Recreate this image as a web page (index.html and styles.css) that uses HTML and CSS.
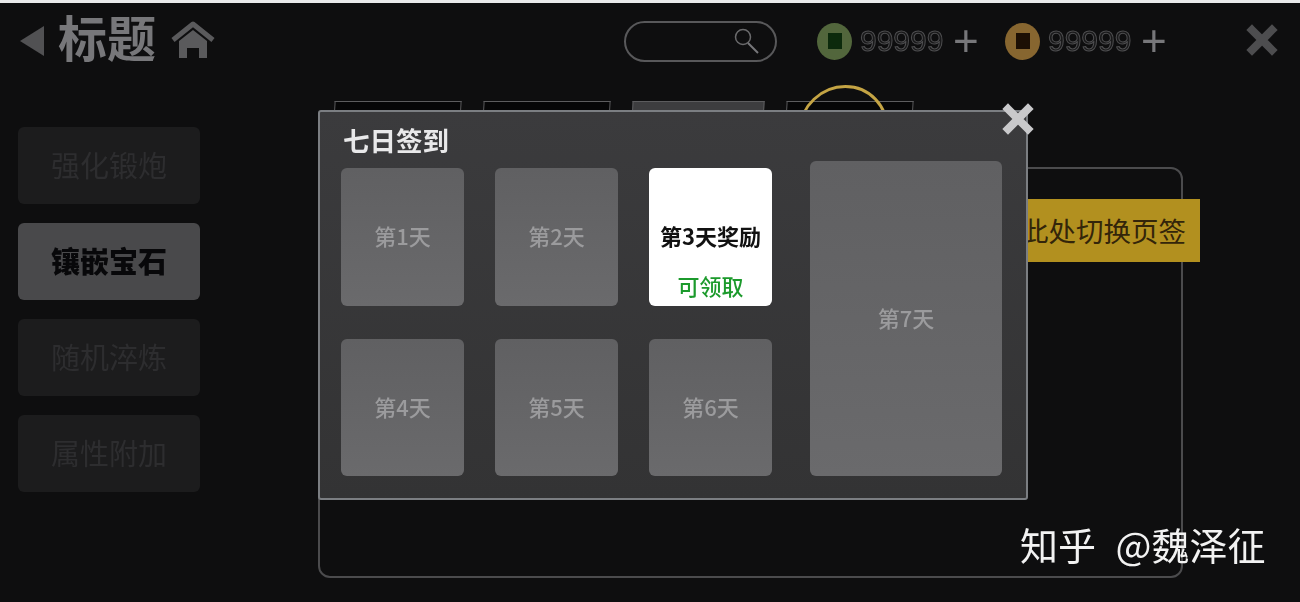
FILE: index.html
```html
<!DOCTYPE html>
<html lang="zh">
<head>
    <meta charset="utf-8">
    <title>七日签到</title>
    <link rel="stylesheet" href="styles.css">
</head>
<body>
    <div class="page">
        <div class="topline"></div>
        <div class="topbar">
            <svg class="back" width="24" height="30" viewBox="0 0 24 30"><path d="M0 15L24 0V30Z" fill="#515153"/></svg>
            <div class="title">标题</div>
            <svg class="home" width="44" height="38" viewBox="0 0 44 38">
                <path d="M2 19L22 3L42 19" fill="none" stroke="#5a5a5c" stroke-width="5" stroke-linejoin="round"/>
                <path d="M8 20L22 9L36 20V37H28V27H16V37H8Z" fill="#5a5a5c"/>
            </svg>
            <div class="search">
                <svg width="26" height="26" viewBox="0 0 26 26">
                    <circle cx="9" cy="9" r="7.5" fill="none" stroke="#6a6a6c" stroke-width="1.5"/>
                    <path d="M14 15L24 25" stroke="#77777a" stroke-width="2"/>
                </svg>
            </div>
            <div class="coin coin-green"><span></span></div>
            <div class="num">99999</div>
            <div class="plus">+</div>
            <div class="coin coin-gold"><span></span></div>
            <div class="num">99999</div>
            <div class="plus">+</div>
            <svg class="quit" width="32" height="32" viewBox="0 0 32 32">
                <path d="M6 6L26 26M26 6L6 26" stroke="#4d4d4f" stroke-width="8" stroke-linecap="square"/>
            </svg>
        </div>
        <div class="main">
            <div class="sidebar">
                <div class="side-item">强化锻炮</div>
                <div class="side-item active">镶嵌宝石</div>
                <div class="side-item">随机淬炼</div>
                <div class="side-item">属性附加</div>
            </div>
            <div class="content">
                <div class="tabs">
                    <div class="tab"></div>
                    <div class="tab"></div>
                    <div class="tab filled"></div>
                    <div class="tab last"><div class="ring"></div></div>
                </div>
                <div class="frame">
                    <div class="tip">此处切换页签</div>
                </div>
            </div>
        </div>

        <div class="modal">
            <svg class="close" width="34" height="34" viewBox="0 0 34 34">
                <path d="M7 7L27 27M27 7L7 27" stroke="#c9c9cb" stroke-width="8" stroke-linecap="square"/>
            </svg>
            <div class="modal-title">七日签到</div>
            <div class="days">
                <div class="day">第1天</div>
                <div class="day">第2天</div>
                <div class="day today">
                    <div class="today-name">第3天奖励</div>
                    <div class="today-get">可领取</div>
                </div>
                <div class="day">第4天</div>
                <div class="day">第5天</div>
                <div class="day">第6天</div>
                <div class="day big">第7天</div>
            </div>
        </div>

        <div class="watermark">知乎 @魏泽征</div>
    </div>
</body>
</html>
```

FILE: styles.css
```css
* {
    box-sizing: border-box;
}
body {
    margin: 0;
    background-color: #0e0e0f;
    font-family: "Liberation Sans", "Noto Sans CJK SC", sans-serif;
    overflow: hidden;
}
.page {
    position: relative;
    width: 1300px;
    height: 602px;
    filter: blur(0.5px);
}
.topline {
    height: 3px;
    background-color: #e9eaea;
}

/* top bar */
.topbar {
    display: flex;
    align-items: center;
    height: 76px;
    padding-left: 20px;
}
.title {
    margin-left: 14px;
    width: 98px;
    font-size: 49px;
    line-height: 60px;
    font-weight: 700;
    color: #77777a;
    font-family: "Noto Sans CJK SC", sans-serif;
    margin-top: -10px;
}
.home {
    margin-left: 15px;
    margin-top: -2px;
}
.search {
    display: flex;
    align-items: center;
    justify-content: flex-end;
    width: 153px;
    height: 41px;
    margin-left: 409px;
    padding-right: 15px;
    border: 2px solid #58585a;
    border-radius: 21px;
}
.coin {
    display: flex;
    align-items: center;
    justify-content: center;
    width: 35px;
    height: 37px;
    border-radius: 50%;
}
.coin span {
    display: block;
    width: 14px;
    height: 16px;
}
.coin-green {
    margin-left: 40px;
    background-color: #52663c;
}
.coin-green span {
    background-color: #0c2a0c;
}
.coin-gold {
    margin-left: 28px;
    background-color: #876630;
}
.coin-gold span {
    background-color: #1c0f04;
}
.num {
    width: 84px;
    margin-left: 8px;
    font-size: 30px;
    font-family: "Liberation Sans", sans-serif;
    color: #19191a;
    -webkit-text-stroke: 1px #4f4f51;
}
.plus {
    width: 24px;
    margin-left: 9px;
    font-size: 44px;
    line-height: 36px;
    text-align: center;
    color: #77777a;
}
.quit {
    margin-left: 81px;
    margin-top: -3px;
}

/* page behind the dialog */
.main {
    display: flex;
    padding-left: 18px;
}
.sidebar {
    display: flex;
    flex-direction: column;
    gap: 19px;
    width: 182px;
    margin-top: 48px;
}
.side-item {
    height: 77px;
    line-height: 75px;
    text-align: center;
    border-radius: 6px;
    background-color: #1c1c1d;
    color: #2d2d2f;
    font-size: 29px;
    font-family: "Noto Sans CJK SC", sans-serif;
}
.side-item.active {
    background-color: #49494b;
    color: #08080a;
    font-weight: 900;
}
.content {
    width: 865px;
    margin-left: 118px;
}
.tabs {
    display: flex;
    gap: 22px;
    height: 66px;
    margin-top: 22px;
    padding-left: 16px;
}
.tab {
    position: relative;
    width: 127px;
    height: 24px;
    border: 1px solid #5c5c5e;
    border-bottom: 0;
    background-color: #060607;
    transform: skewX(-3deg);
}
.tab.filled {
    width: 132px;
    background-color: #3d3d3f;
}
.ring {
    position: absolute;
    top: -17px;
    left: 12px;
    width: 90px;
    height: 90px;
    border: 3px solid #c4a444;
    border-radius: 50%;
}
.frame {
    position: relative;
    height: 411px;
    border: 2px solid #4b4b4d;
    border-radius: 12px;
    background-color: #0e0e0f;
}
.tip {
    position: absolute;
    top: 30px;
    right: -19px;
    width: 260px;
    height: 63px;
    padding-right: 14px;
    line-height: 63px;
    text-align: right;
    font-size: 27.5px;
    color: #33250a;
    background-color: #b2901f;
    font-family: "Noto Sans CJK SC", sans-serif;
}

/* sign in dialog */
.modal {
    position: absolute;
    top: 110px;
    left: 318px;
    width: 710px;
    height: 390px;
    padding: 13px 21px 0;
    border: 2px solid #7b7e82;
    border-radius: 3px;
    background: linear-gradient(#3b3b3d, #333334);
    font-family: "Noto Sans CJK SC", sans-serif;
}
.close {
    position: absolute;
    top: -10px;
    right: -9px;
}
.modal-title {
    margin-left: 2px;
    height: 30px;
    font-size: 26.5px;
    line-height: 30px;
    font-weight: 700;
    color: #e9e9ea;
}
.days {
    display: grid;
    grid-template-columns: 123px 123px 123px 192px;
    grid-template-rows: 138px 137px;
    column-gap: 31px;
    row-gap: 33px;
    margin-top: 13px;
}
.day {
    display: flex;
    align-items: center;
    justify-content: center;
    padding-bottom: 4px;
    border-radius: 6px;
    background: linear-gradient(#606062, #6a6a6c);
    color: #9b9b9d;
    font-size: 22px;
    font-weight: 500;
}
.day.big {
    grid-column: 4;
    grid-row: 1 / 3;
    margin-top: -7px;
    margin-left: 7px;
    margin-right: -7px;
}
.day.today {
    display: block;
    padding-bottom: 0;
    background: #fff;
    text-align: center;
}
.today-name {
    margin-top: 51px;
    font-size: 22px;
    line-height: 32px;
    font-weight: 700;
    color: #111;
}
.today-get {
    margin-top: 18px;
    font-size: 22px;
    line-height: 32px;
    font-weight: 500;
    color: #1c9a2c;
}
.day:nth-child(4),
.day:nth-child(5),
.day:nth-child(6) {
    grid-row: 2;
}

.watermark {
    position: absolute;
    top: 517px;
    left: 1020px;
    font-size: 38px;
    line-height: 54px;
    word-spacing: 11px;
    white-space: nowrap;
    color: #f2f2f2;
    font-family: "Noto Sans CJK SC", sans-serif;
}
```
